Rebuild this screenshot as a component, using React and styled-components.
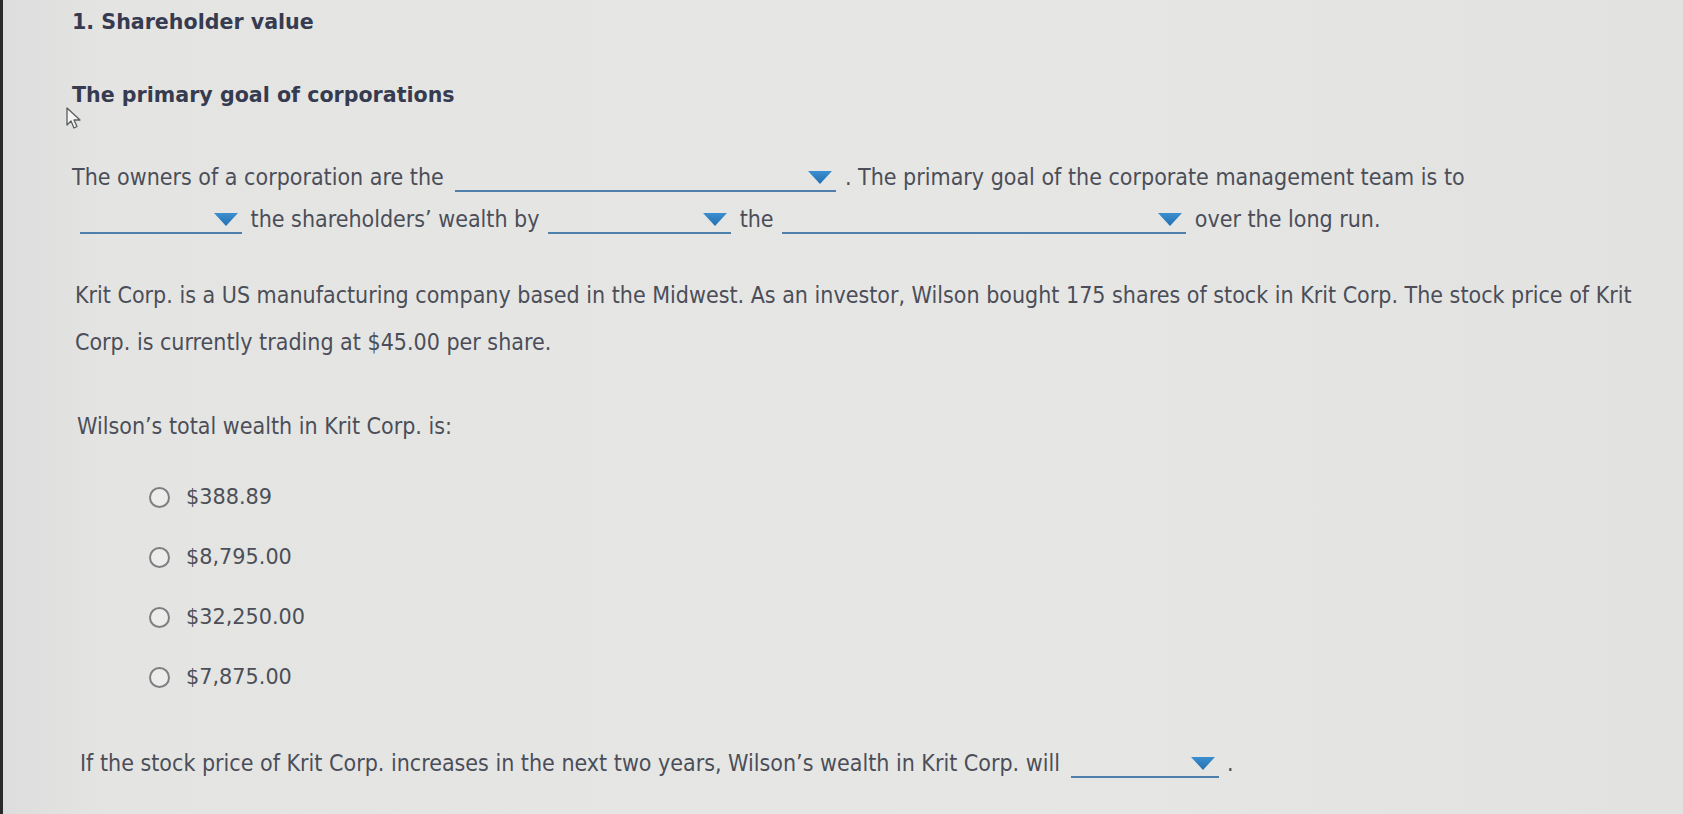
import React from 'react';
import styled, { createGlobalStyle } from 'styled-components';

const GlobalStyle = createGlobalStyle`
  html, body {
    margin: 0;
    padding: 0;
    background: #e4e5e3;
  }
  body {
    font-family: "DejaVu Sans Condensed", "DejaVu Sans", Verdana, sans-serif;
    color: #4a4d57;
  }
`;

const Page = styled.div`
  position: relative;
  width: 1683px;
  height: 814px;
  box-sizing: border-box;
  padding: 7px 0 0 69px;
  overflow: hidden;
  background: linear-gradient(90deg, #dcdddc 0%, #e4e5e3 6%, #e6e7e5 60%, #e2e3e1 100%);
  border-left: 3px solid #2a2a2a;
`;

const Title = styled.h1`
  margin: 0;
  font-family: "DejaVu Sans", Verdana, sans-serif;
  font-size: 20.6px;
  font-weight: bold;
  line-height: 30px;
  color: #363b50;
`;

const Subtitle = styled.h2`
  margin: 43px 0 0;
  font-family: "DejaVu Sans", Verdana, sans-serif;
  font-size: 20.6px;
  font-weight: bold;
  line-height: 30px;
  color: #363b50;
`;

const Cursor = styled.svg`
  position: absolute;
  left: 62px;
  top: 106px;
`;

const Paragraph = styled.p`
  margin: ${p => p.$top}px 0 0;
  padding-left: ${p => p.$indent ?? 0}px;
  font-size: 23px;
  line-height: ${p => p.$lh}px;
  color: #4b4e58;
`;

const Select = styled.span`
  display: inline-flex;
  align-items: center;
  justify-content: flex-end;
  box-sizing: border-box;
  width: ${p => p.$w}px;
  height: 27px;
  margin: 0 ${p => p.$mr ?? 2}px 0 ${p => p.$ml ?? 2}px;
  padding-right: 4px;
  border-bottom: 2px solid #4f7fab;
  vertical-align: middle;
`;

const Options = styled.ul`
  list-style: none;
  margin: 21px 0 0;
  padding: 0 0 0 77px;
`;

const Option = styled.li`
  display: flex;
  align-items: center;
  height: 60px;
  gap: 16px;
  font-family: "DejaVu Sans", Verdana, sans-serif;
  font-size: 20.8px;
  color: #4c4f58;
`;

const Radio = styled.span`
  width: 17px;
  height: 17px;
  border-radius: 50%;
  border: 2px solid #7d7f82;
  background: #ecedeb;
  flex-shrink: 0;
`;

const Arrow = () => (
  <svg width="24" height="13" viewBox="0 0 24 13">
    <defs>
      <linearGradient id="ag" x1="0" y1="0" x2="0" y2="1">
        <stop offset="0" stopColor="#3b8fd0" />
        <stop offset="1" stopColor="#2470b0" />
      </linearGradient>
    </defs>
    <path d="M0 0 H24 L12 13 Z" fill="url(#ag)" />
  </svg>
);

const Dropdown = ({ w, ml, mr }) => (
  <Select $w={w} $ml={ml} $mr={mr}>
    <Arrow />
  </Select>
);

const answers = ['$388.89', '$8,795.00', '$32,250.00', '$7,875.00'];

export default function App() {
  return (
    <>
      <GlobalStyle />
      <Page>
        <Title>1. Shareholder value</Title>
        <Subtitle>The primary goal of corporations</Subtitle>
        <Cursor width="18" height="24" viewBox="0 0 18 24">
          <path
            d="M2 2 L2 19 L6 15 L9 22 L12 20.5 L9 14 L15 14 Z"
            fill="#f4f4f2"
            stroke="#5a5c60"
            strokeWidth="1.3"
            strokeLinejoin="round"
          />
        </Cursor>

        <Paragraph $top={46} $lh={42}>
          The owners of a corporation are the <Dropdown w={381} ml={5} /> . The primary goal of the corporate management team is to
          <br />
          <Dropdown w={162} ml={8} /> the shareholders’ wealth by <Dropdown w={183} /> the <Dropdown w={404} /> over the long run.
        </Paragraph>

        <Paragraph $top={32} $lh={47} $indent={3}>
          Krit Corp. is a US manufacturing company based in the Midwest. As an investor, Wilson bought 175 shares of stock in Krit Corp. The stock price of Krit
          <br />
          Corp. is currently trading at $45.00 per share.
        </Paragraph>

        <Paragraph $top={40} $lh={40} $indent={5}>
          Wilson’s total wealth in Krit Corp. is:
        </Paragraph>

        <Options>
          {answers.map(a => (
            <Option key={a}>
              <Radio />
              {a}
            </Option>
          ))}
        </Options>

        <Paragraph $top={36} $lh={40} $indent={8}>
          If the stock price of Krit Corp. increases in the next two years, Wilson’s wealth in Krit Corp. will <Dropdown w={148} ml={4} /> .
        </Paragraph>
      </Page>
    </>
  );
}
